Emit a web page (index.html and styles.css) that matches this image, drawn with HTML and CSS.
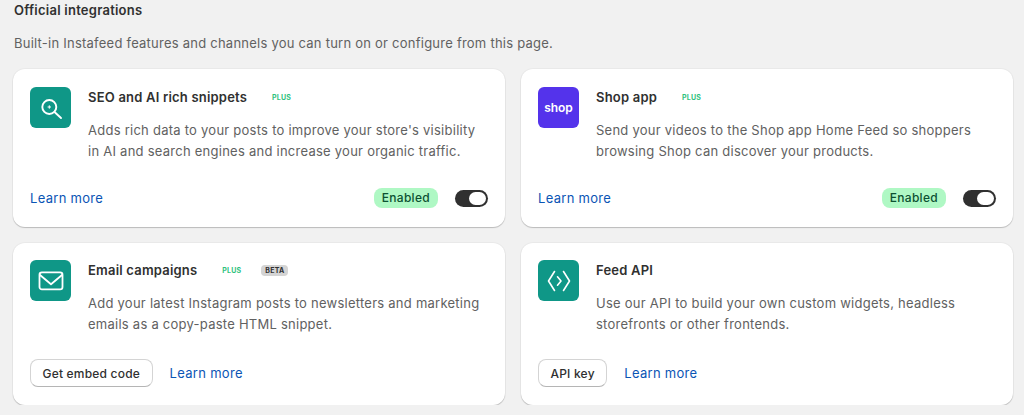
FILE: index.html
```html
<!DOCTYPE html>
<html lang="en">
<head>
  <meta charset="UTF-8">
  <meta name="viewport" content="width=device-width, initial-scale=1.0">
  <title>Official integrations</title>
  <link rel="stylesheet" href="styles.css">
</head>
<body>
  <div class="container">
    <h2 class="section-title">Official integrations</h2>
    <p class="section-sub">Built-in Instafeed features and channels you can turn on or configure from this page.</p>

    <div class="card-grid">
      <!-- SEO -->
      <div class="card card-top">
        <div class="card-head">
          <div class="icon-box">
            <svg width="24" height="24" viewBox="0 0 24 24" fill="none" stroke="#fff" stroke-width="1.9" stroke-linecap="round">
              <circle cx="10.300" cy="11" r="7"/>
              <path d="M15.500 16l6.500 6"/>
              <path d="M9 11h2.600M10.300 9.700v2.600" stroke-width="1"/>
            </svg>
          </div>
          <div class="card-body">
            <div class="card-title-row">
              <span class="card-title">SEO and AI rich snippets</span>
              <span class="tag-plus">PLUS</span>
            </div>
            <p class="card-text">Adds rich data to your posts to improve your store's visibility<br>in AI and search engines and increase your organic traffic.</p>
          </div>
        </div>
        <div class="card-foot">
          <a class="link" href="#">Learn more</a>
          <div class="status">
            <span class="badge-enabled">Enabled</span>
            <span class="toggle"><span class="toggle-knob"></span></span>
          </div>
        </div>
      </div>

      <!-- Shop -->
      <div class="card card-top">
        <div class="card-head">
          <div class="icon-box icon-shop"><span class="shop-word">shop</span></div>
          <div class="card-body">
            <div class="card-title-row">
              <span class="card-title">Shop app</span>
              <span class="tag-plus">PLUS</span>
            </div>
            <p class="card-text">Send your videos to the Shop app Home Feed so shoppers<br>browsing Shop can discover your products.</p>
          </div>
        </div>
        <div class="card-foot">
          <a class="link" href="#">Learn more</a>
          <div class="status">
            <span class="badge-enabled">Enabled</span>
            <span class="toggle"><span class="toggle-knob"></span></span>
          </div>
        </div>
      </div>

      <!-- Email -->
      <div class="card">
        <div class="card-head">
          <div class="icon-box">
            <svg width="28" height="24" viewBox="0 0 28 24" fill="none" stroke="#fff" stroke-width="1.8" stroke-linecap="round" stroke-linejoin="round">
              <rect x="2.500" y="3.400" width="23" height="17" rx="2.400"/>
              <path d="M3 6l11 9.200 11-9.200"/>
            </svg>
          </div>
          <div class="card-body">
            <div class="card-title-row">
              <span class="card-title">Email campaigns</span>
              <span class="tag-plus">PLUS</span>
              <span class="tag-beta">BETA</span>
            </div>
            <p class="card-text">Add your latest Instagram posts to newsletters and marketing<br>emails as a copy-paste HTML snippet.</p>
          </div>
        </div>
        <div class="card-foot card-foot-start">
          <button class="btn">Get embed code</button>
          <a class="link" href="#">Learn more</a>
        </div>
      </div>

      <!-- Feed API -->
      <div class="card">
        <div class="card-head">
          <div class="icon-box">
            <svg width="26" height="24" viewBox="0 0 26 24" fill="none" stroke="#fff" stroke-width="1.6" stroke-linecap="round" stroke-linejoin="round">
              <path d="M8.500 2.500L2.500 12l6 9.500"/>
              <path d="M17.500 2.500l6 9.500-6 9.500"/>
              <path d="M11.500 7.800L15 12l-3.500 4.200"/>
            </svg>
          </div>
          <div class="card-body">
            <div class="card-title-row">
              <span class="card-title">Feed API</span>
            </div>
            <p class="card-text">Use our API to build your own custom widgets, headless<br>storefronts or other frontends.</p>
          </div>
        </div>
        <div class="card-foot card-foot-start">
          <button class="btn">API key</button>
          <a class="link" href="#">Learn more</a>
        </div>
      </div>
    </div>
  </div>
</body>
</html>
```

FILE: styles.css
```css
* {
  box-sizing: border-box;
  margin: 0;
  padding: 0;
}

body {
  font-family: Inter, "Liberation Sans", sans-serif;
  font-size: 13px;
  background-color: #f1f1f1;
  color: #303030;
  overflow: hidden;
}

.container {
  padding: 2px 11px 0 13px;
}

.section-title {
  font-size: 13px;
  font-weight: 600;
  line-height: 16px;
  margin-left: 1px;
  letter-spacing: 0.24px;
}

.section-sub {
  color: #616161;
  line-height: 20px;
  margin: 15px 0 16px 1px;
  letter-spacing: 0.235px;
}

.card-grid {
  display: grid;
  grid-template-columns: 1fr 1fr;
  gap: 16px;
}

.card {
  display: flex;
  flex-direction: column;
  justify-content: space-between;
  height: 162px;
  padding: 17px 17px 18px;
  background-color: white;
  border-radius: 12px;
  box-shadow: 0 1px 1px rgba(0, 0, 0, 0.2), 0 0 0 1px rgba(0, 0, 0, 0.03);
}

.card-top {
  height: 158px;
  padding-top: 18px;
  padding-bottom: 19px;
}

.card-head {
  display: flex;
  gap: 17px;
}

.icon-box {
  display: flex;
  justify-content: center;
  align-items: center;
  flex-shrink: 0;
  width: 41px;
  height: 41px;
  background-color: #0f9787;
  border-radius: 6px;
}

.icon-shop {
  background-color: #5433eb;
}

.shop-word {
  color: white;
  font-size: 12px;
  font-weight: 600;
}

.card-title-row {
  display: flex;
  align-items: center;
  height: 20px;
}

.card-title {
  font-weight: 600;
  margin-right: 25px;
  letter-spacing: 0.2px;
}

.tag-plus {
  color: #2fc27e;
  font-size: 7px;
  font-weight: 700;
  letter-spacing: 0.2px;
}

.tag-beta {
  margin-left: 20px;
  padding: 1px 4px;
  background-color: #d4d4d4;
  border-radius: 4px;
  font-size: 7px;
  font-weight: 700;
  letter-spacing: 0.2px;
}

.card-text {
  margin-top: 13px;
  color: #616161;
  line-height: 21px;
  letter-spacing: 0.25px;
}

.card-foot {
  display: flex;
  justify-content: space-between;
  align-items: center;
}

.card-foot-start {
  justify-content: flex-start;
  gap: 17px;
}

.link {
  color: #0b55b5;
  text-decoration: none;
  letter-spacing: 0.3px;
}

.status {
  display: flex;
  align-items: center;
  gap: 17px;
}

.badge-enabled {
  padding: 2px 8px;
  background-color: #aff8c4;
  border-radius: 8px;
  color: #0c5132;
  font-size: 12px;
  font-weight: 500;
  line-height: 16px;
  letter-spacing: 0.3px;
}

.toggle {
  display: flex;
  justify-content: flex-end;
  align-items: center;
  width: 33px;
  height: 17px;
  padding-right: 2px;
  background-color: #303030;
  border-radius: 9px;
}

.toggle-knob {
  width: 17px;
  height: 13px;
  background-color: white;
  border-radius: 7px;
}

.btn {
  height: 28px;
  padding: 0 11.5px;
  background-color: white;
  border: 1px solid #d4d4d4;
  border-bottom-color: #b5b5b5;
  border-radius: 8px;
  color: #303030;
  font-family: inherit;
  font-size: 12px;
  font-weight: 500;
  letter-spacing: 0.2px;
  cursor: pointer;
}
```
